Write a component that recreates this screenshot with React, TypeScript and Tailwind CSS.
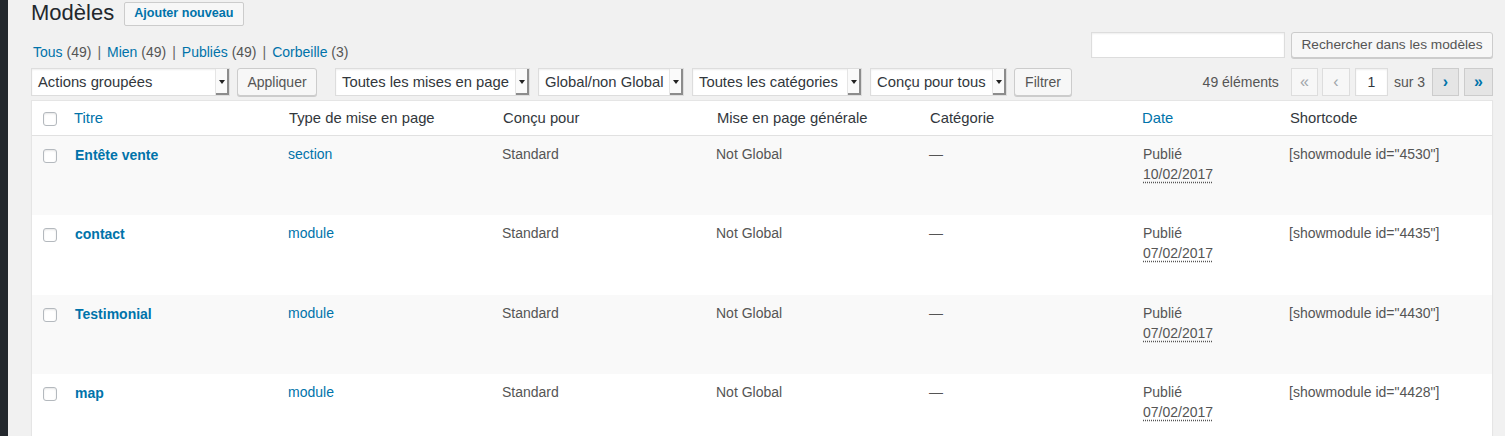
import React from "react";

const rows = [
  { title: "Entête vente", type: "section", date: "10/02/2017", id: "4530" },
  { title: "contact", type: "module", date: "07/02/2017", id: "4435" },
  { title: "Testimonial", type: "module", date: "07/02/2017", id: "4430" },
  { title: "map", type: "module", date: "07/02/2017", id: "4428" },
];

const cols =
  "grid grid-cols-[32px_215px_214px_214px_213px_212px_148px_1fr]";

function Checkbox() {
  return (
    <span className="block w-[14px] h-[14px] rounded-[3px] border border-[#b4b9be] bg-white shadow-[inset_0_1px_2px_rgba(0,0,0,0.1)]" />
  );
}

function Select({ label, width }: { label: string; width: string }) {
  return (
    <div
      className={`${width} h-[28px] flex items-center bg-white border border-[#ddd] shadow-[inset_0_1px_2px_rgba(0,0,0,0.07)] text-[14.8px] text-[#32373c]`}
    >
      <span className="flex-1 pl-[6px] whitespace-nowrap overflow-hidden">
        {label}
      </span>
      <span className="w-[14px] h-[26px] flex items-center justify-center bg-[#fafafa] border-l border-[#e5e5e5] shadow-[inset_-2px_-2px_0_#8c8c8c]">
        <svg width="6" height="4" viewBox="0 0 6 4" className="-mt-[1px] -ml-[1px]">
          <path d="M0 0h6L3 4z" fill="#222" />
        </svg>
      </span>
    </div>
  );
}

function Button({ label, width }: { label: string; width: string }) {
  return (
    <button
      className={`${width} h-[28px] rounded-[3px] border border-[#ccc] bg-[#f7f7f7] shadow-[0_1px_0_#ccc] text-[14px] text-[#555]`}
    >
      {label}
    </button>
  );
}

function PageButton({
  glyph,
  active,
  width,
}: {
  glyph: string;
  active?: boolean;
  width: string;
}) {
  return (
    <span
      className={`${width} h-[28px] flex items-center justify-center border text-[16px] leading-none ${
        active
          ? "bg-[#e5e5e5] border-[#ccc] text-[#0073aa] font-bold"
          : "bg-[#f7f7f7] border-[#ddd] text-[#a0a5aa]"
      }`}
    >
      {glyph}
    </span>
  );
}

export default function App() {
  return (
    <div className="flex min-h-screen font-['Liberation_Sans',Arial,sans-serif] text-[#444]">
      <div className="w-[8px] bg-[#23282d] shrink-0" />
      <div className="flex-1 bg-[#f1f1f1] pl-[23px] pr-[12px]">
        {/* heading */}
        <div className="h-[26px] flex items-center">
          <h1 className="text-[22px] leading-[26px] text-[#23282d] -mt-[1px]">
            Modèles
          </h1>
          <button className="ml-[10px] mt-[1px] h-[24px] px-[9px] rounded-[2px] border border-[#ccc] bg-[#f7f7f7] text-[12.6px] font-bold text-[#0073aa]">
            Ajouter nouveau
          </button>
        </div>

        {/* views + search */}
        <div className="mt-[6px] h-[26px] flex justify-between items-start">
          <div className="pt-[12px] pl-[2px] text-[14px] leading-[16px] text-[#666] whitespace-nowrap">
            <span className="text-[#0073aa]">Tous</span>{" "}
            <span className="text-[#555]">(49)</span>
            <span className="mx-[6px]">|</span>
            <span className="text-[#0073aa]">Mien</span>{" "}
            <span className="text-[#555]">(49)</span>
            <span className="mx-[6px]">|</span>
            <span className="text-[#0073aa]">Publiés</span>{" "}
            <span className="text-[#555]">(49)</span>
            <span className="mx-[6px]">|</span>
            <span className="text-[#0073aa]">Corbeille</span>{" "}
            <span className="text-[#555]">(3)</span>
          </div>
          <div className="flex gap-[6px]">
            <div className="w-[194px] h-[26px] bg-white border border-[#ddd] shadow-[inset_0_1px_2px_rgba(0,0,0,0.07)]" />
            <button className="w-[202px] h-[26px] rounded-[3px] border border-[#ccc] bg-[#f7f7f7] shadow-[0_1px_0_#ccc] text-[13.7px] text-[#555]">
              Rechercher dans les modèles
            </button>
          </div>
        </div>

        {/* tablenav */}
        <div className="mt-[10px] h-[28px] flex items-center">
          <Select label="Actions groupées" width="w-[199px]" />
          <div className="ml-[7px]">
            <Button label="Appliquer" width="w-[80px]" />
          </div>
          <div className="ml-[18px]">
            <Select label="Toutes les mises en page" width="w-[195px]" />
          </div>
          <div className="ml-[8px]">
            <Select label="Global/non Global" width="w-[146px]" />
          </div>
          <div className="ml-[8px]">
            <Select label="Toutes les catégories" width="w-[170px]" />
          </div>
          <div className="ml-[8px]">
            <Select label="Conçu pour tous" width="w-[137px]" />
          </div>
          <div className="ml-[7px]">
            <Button label="Filtrer" width="w-[58px]" />
          </div>
          <div className="flex-1" />
          <span className="text-[14px] text-[#555] mr-[12px]">49 éléments</span>
          <PageButton glyph="«" width="w-[27px]" />
          <div className="ml-[4px]">
            <PageButton glyph="‹" width="w-[28px]" />
          </div>
          <div className="ml-[5px] w-[33px] h-[28px] bg-white border border-[#ddd] shadow-[inset_0_1px_2px_rgba(0,0,0,0.07)] flex items-center justify-center text-[14px] text-[#32373c]">
            1
          </div>
          <span className="ml-[6px] text-[14px] text-[#555]">sur 3</span>
          <div className="ml-[7px]">
            <PageButton glyph="›" width="w-[27px]" active />
          </div>
          <div className="ml-[5px]">
            <PageButton glyph="»" width="w-[29px]" active />
          </div>
        </div>

        {/* table */}
        <div className="mt-[4px] bg-white border border-[#e5e5e5] shadow-[0_1px_1px_rgba(0,0,0,0.04)]">
          <div
            className={`${cols} h-[35px] items-center border-b border-[#e1e1e1] text-[14.8px] text-[#32373c]`}
          >
            <div className="pl-[11px] pt-[1px]">
              <Checkbox />
            </div>
            <div className="pl-[10px] text-[#0073aa]">Titre</div>
            <div className="pl-[10px]">Type de mise en page</div>
            <div className="pl-[10px]">Conçu pour</div>
            <div className="pl-[10px]">Mise en page générale</div>
            <div className="pl-[10px]">Catégorie</div>
            <div className="pl-[10px] text-[#0073aa]">Date</div>
            <div className="pl-[10px]">Shortcode</div>
          </div>
          {rows.map((r, i) => (
            <div
              key={r.id}
              className={`${cols} h-[79.3px] text-[14px] leading-[20px] text-[#555] ${
                i % 2 === 0 ? "bg-[#f9f9f9]" : "bg-white"
              }`}
            >
              <div className="pl-[11px] pt-[13px]">
                <Checkbox />
              </div>
              <div className="pl-[11px] pt-[9px] text-[14px] font-bold text-[#0073aa]">
                {r.title}
              </div>
              <div className="pl-[9px] pt-[8px] text-[#0073aa]">{r.type}</div>
              <div className="pl-[9px] pt-[8px]">Standard</div>
              <div className="pl-[9px] pt-[8px]">Not Global</div>
              <div className="pl-[9px] pt-[8px]">—</div>
              <div className="pl-[11px] pt-[8px]">
                <div>Publié</div>
                <div>
                  <span className="underline decoration-dotted underline-offset-[3px]">
                    {r.date}
                  </span>
                </div>
              </div>
              <div className="pl-[9px] pt-[8px]">
                [showmodule id="{r.id}"]
              </div>
            </div>
          ))}
        </div>
      </div>
    </div>
  );
}
